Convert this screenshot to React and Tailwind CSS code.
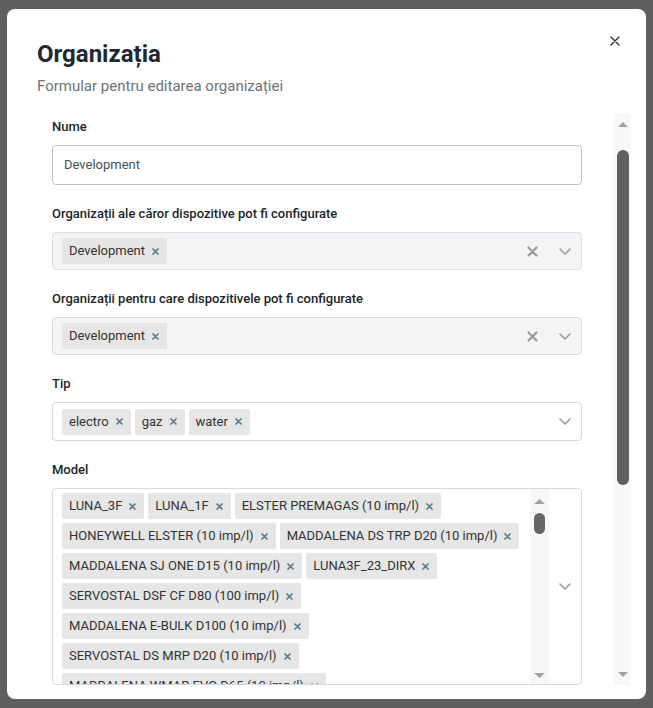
import React from "react";

const ChipX = () => (
  <svg width="7" height="7" viewBox="0 0 7 7" className="block">
    <path d="M1 1 L6 6 M6 1 L1 6" stroke="#567a8c" strokeWidth="1.7" strokeLinecap="round" />
  </svg>
);

const Chip = ({ label }) => (
  <div className="flex h-[26px] shrink-0 items-center rounded-[2px] bg-[#e6e6e6] pl-[7px] pr-[8px] text-[13px] text-[#333333]">
    <span className="whitespace-nowrap">{label}</span>
    <span className="ml-[7px] flex items-center">
      <ChipX />
    </span>
  </div>
);

const Chevron = () => (
  <svg width="12" height="7" viewBox="0 0 12 7" className="block">
    <path d="M1 1 L6 6 L11 1" stroke="#9a9a9a" strokeWidth="1.6" fill="none" strokeLinecap="round" strokeLinejoin="round" />
  </svg>
);

const ClearX = () => (
  <svg width="11" height="11" viewBox="0 0 11 11" className="block">
    <path d="M1.5 1.5 L9.5 9.5 M9.5 1.5 L1.5 9.5" stroke="#9a9a9a" strokeWidth="2.2" strokeLinecap="round" />
  </svg>
);

const TriUp = ({ w = 10, h = 5, color = "#a3a3a3" }) => (
  <svg width={w} height={h} viewBox={`0 0 ${w} ${h}`} className="block">
    <polygon points={`0,${h} ${w / 2},0 ${w},${h}`} fill={color} />
  </svg>
);

const TriDown = ({ w = 10, h = 5, color = "#a3a3a3" }) => (
  <svg width={w} height={h} viewBox={`0 0 ${w} ${h}`} className="block">
    <polygon points={`0,0 ${w},0 ${w / 2},${h}`} fill={color} />
  </svg>
);

const Label = ({ children }) => (
  <div className="mb-[9px] text-[13px] font-medium leading-[18px] text-[#212529]">{children}</div>
);

const models = [
  "LUNA_3F",
  "LUNA_1F",
  "ELSTER PREMAGAS (10 imp/l)",
  "HONEYWELL ELSTER (10 imp/l)",
  "MADDALENA DS TRP D20 (10 imp/l)",
  "MADDALENA SJ ONE D15 (10 imp/l)",
  "LUNA3F_23_DIRX",
  "SERVOSTAL DSF CF D80 (100 imp/l)",
  "MADDALENA E-BULK D100 (10 imp/l)",
  "SERVOSTAL DS MRP D20 (10 imp/l)",
  "MADDALENA WMAR EVO D65 (10 imp/l)",
];

export default function App() {
  return (
    <div className="min-h-[708px] w-full bg-[#5f5f5f] pl-[7px] pt-[9px] font-['Roboto',sans-serif]">
      <div className="flex h-[690px] w-[639px] flex-col rounded-[8px] bg-white pb-[14px] pl-[30px] pr-[15px] pt-[29px]">
        <div className="flex items-start justify-between">
          <h2 className="text-[24px] font-bold leading-[32px] text-[#1f2933]">Organizația</h2>
          <button className="-mt-[7px] mr-[6px] flex h-[20px] w-[20px] items-center justify-center">
            <svg width="10" height="10" viewBox="0 0 10 10" className="block">
              <path d="M1 1 L9 9 M9 1 L1 9" stroke="#2b2b2b" strokeWidth="1.3" strokeLinecap="round" />
            </svg>
          </button>
        </div>
        <p className="mt-[5px] text-[15px] leading-[22px] text-[#6f7377]">
          Formular pentru editarea organizației
        </p>

        <div className="mt-[16px] flex h-[572px] overflow-hidden">
          <div className="w-[545px] shrink-0 pl-[15px] pt-[5px]">
            <Label>Nume</Label>
            <div className="mb-[20px] flex h-[40px] items-center rounded-[4px] border border-[#b9c2cb] px-[11px] text-[13px] text-[#495057]">
              Development
            </div>

            <Label>Organizații ale căror dispozitive pot fi configurate</Label>
            <div className="mb-[20px] flex h-[38px] items-center rounded-[4px] border border-[#dcdfe3] bg-[#f3f4f6]">
              <div className="flex flex-1 items-center pl-[9px]">
                <Chip label="Development" />
              </div>
              <div className="flex w-[34px] items-center justify-center">
                <ClearX />
              </div>
              <div className="flex w-[32px] items-center justify-center">
                <Chevron />
              </div>
            </div>

            <Label>Organizații pentru care dispozitivele pot fi configurate</Label>
            <div className="mb-[20px] flex h-[38px] items-center rounded-[4px] border border-[#dcdfe3] bg-[#f3f4f6]">
              <div className="flex flex-1 items-center pl-[9px]">
                <Chip label="Development" />
              </div>
              <div className="flex w-[34px] items-center justify-center">
                <ClearX />
              </div>
              <div className="flex w-[32px] items-center justify-center">
                <Chevron />
              </div>
            </div>

            <Label>Tip</Label>
            <div className="mb-[20px] flex h-[39px] items-center rounded-[4px] border border-[#d6d9dd] bg-white">
              <div className="flex flex-1 items-center gap-[4px] pl-[9px]">
                <Chip label="electro" />
                <Chip label="gaz" />
                <Chip label="water" />
              </div>
              <div className="flex w-[32px] items-center justify-center">
                <Chevron />
              </div>
            </div>

            <Label>Model</Label>
            <div className="flex h-[197px] rounded-[4px] border border-[#d6d9dd] bg-white">
              <div className="flex flex-1 flex-wrap content-start gap-[4px] overflow-hidden pl-[9px] pt-[4px]">
                {models.map((m) => (
                  <Chip key={m} label={m} />
                ))}
              </div>
              <div className="flex w-[19px] flex-col items-center bg-[#f7f7f7] pb-[6px] pt-[10px]">
                <TriUp w={11} h={5} />
                <div className="mt-[9px] h-[21px] w-[11px] rounded-full bg-[#666666]" />
                <div className="flex-1" />
                <TriDown w={11} h={5} />
              </div>
              <div className="flex w-[32px] items-center justify-center">
                <Chevron />
              </div>
            </div>
          </div>

          <div className="ml-auto flex w-[17px] flex-col items-center bg-[#f8f8f8] pb-[8px] pt-[9px]">
            <TriUp w={10} h={5} />
            <div className="mt-[23px] h-[335px] w-[12px] rounded-full bg-[#606060]" />
            <div className="flex-1" />
            <TriDown w={10} h={5} />
          </div>
        </div>
      </div>
    </div>
  );
}
